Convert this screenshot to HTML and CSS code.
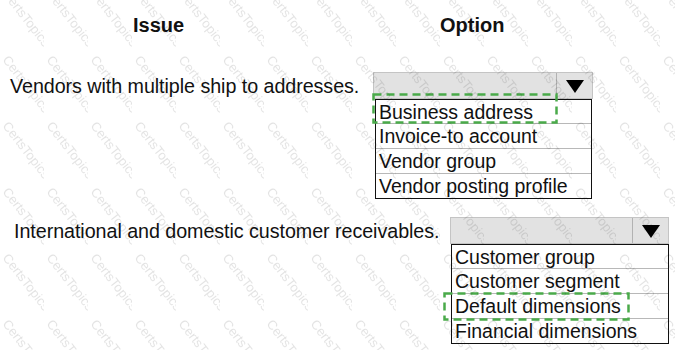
FILE: index.html
```html
<!DOCTYPE html>
<html lang="en">
<head>
    <meta charset="UTF-8">
    <meta name="viewport" content="width=device-width, initial-scale=1.0">
    <title>Issue / Option</title>
    <link rel="stylesheet" href="styles.css">
</head>
<body>
    <div class="sheet">
        <div class="heads">
            <div class="head-issue">Issue</div>
            <div class="head-option">Option</div>
        </div>

        <div class="question q1">
            <div class="label">Vendors with multiple ship to addresses.</div>
            <div class="dropdown">
                <div class="combo">
                    <div class="combo-btn">
                        <svg width="18" height="13" viewBox="0 0 18 13"><polygon points="0,0 18,0 9,13" fill="#000"/></svg>
                    </div>
                </div>
                <ul class="options">
                    <li>Business address</li>
                    <li>Invoice-to account</li>
                    <li>Vendor group</li>
                    <li>Vendor posting profile</li>
                </ul>
                <svg class="answer a1" width="186" height="31" viewBox="0 0 186 31"><rect x="1.5" y="1.5" width="183" height="28" fill="none" stroke="#4aaa4a" stroke-width="2.5" stroke-dasharray="8 5"/></svg>
            </div>
        </div>

        <div class="question q2">
            <div class="label">International and domestic customer receivables.</div>
            <div class="dropdown">
                <div class="combo">
                    <div class="combo-btn">
                        <svg width="18" height="13" viewBox="0 0 18 13"><polygon points="0,0 18,0 9,13" fill="#000"/></svg>
                    </div>
                </div>
                <ul class="options">
                    <li>Customer group</li>
                    <li>Customer segment</li>
                    <li>Default dimensions</li>
                    <li>Financial dimensions</li>
                </ul>
                <svg class="answer a2" width="187" height="29" viewBox="0 0 187 29"><rect x="1.5" y="1.5" width="184" height="26" fill="none" stroke="#4aaa4a" stroke-width="2.5" stroke-dasharray="8 5"/></svg>
            </div>
        </div>

        <svg class="watermark" width="675" height="350">
            <defs>
                <pattern id="wm" width="44" height="66" patternUnits="userSpaceOnUse">
                    <text x="0" y="0" transform="translate(2,-6) rotate(52)" class="wm-text">CertsTopics</text>
                    <text x="0" y="0" transform="translate(2,60) rotate(52)" class="wm-text">CertsTopics</text>
                </pattern>
            </defs>
            <rect width="675" height="350" fill="url(#wm)"/>
        </svg>
    </div>
</body>
</html>
```

FILE: styles.css
```css
body { margin: 0; font-family: "Liberation Sans", Arial, sans-serif; color: #111; background: #fff; }
.sheet { position: relative; width: 675px; height: 350px; overflow: hidden; }

.heads { display: flex; padding: 13px 0 0 133px; font-weight: bold; font-size: 20px; line-height: 24px; }
.head-issue { width: 307px; }

.question { display: flex; align-items: flex-start; font-size: 19.5px; }
.q1 { margin-top: 35px; }
.q2 { margin-top: 18px; }
.q1 .label { width: 363px; padding-left: 10px; }
.q2 .label { width: 436px; padding-left: 14px; }
.label { font-size: 19.7px; line-height: 28px; letter-spacing: -0.05px; white-space: nowrap; }

.dropdown { position: relative; }
.combo { height: 25px; background: #e2e2e2; border: 1px solid #c4c4c4; display: flex; justify-content: flex-end; }
.q1 .combo { width: 218px; }
.q2 .combo { width: 217px; }
.combo-btn { width: 35px; border-left: 1px solid #b2b2b2; display: flex; align-items: center; justify-content: center; padding-top: 2px; }

.options { list-style: none; margin: 0 0 0 2px; padding: 0; border: 1px solid #111; background: #fff; }
.q1 .options { width: 215px; }
.q2 .options { margin-left: 1px; width: 216px; }
.options li { height: 24px; line-height: 24px; padding-left: 3px; border-top: 1px solid #b8b8b8; white-space: nowrap; }
.options li:first-child { border-top: none; height: 23px; }

.answer { position: absolute; pointer-events: none; }
.a1 { left: -1px; top: 21px; }
.a2 { left: -7px; top: 75px; }

.watermark { position: absolute; left: 0; top: 0; pointer-events: none; }
.wm-text { font-family: "Liberation Sans", Arial, sans-serif; font-size: 13px; fill: rgba(0, 0, 0, 0.11); }
```
